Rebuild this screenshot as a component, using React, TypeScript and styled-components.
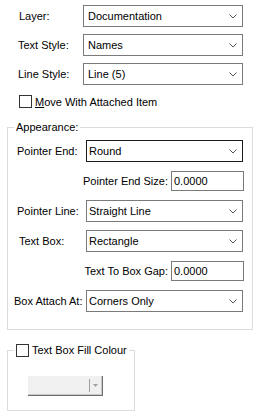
import styled, { createGlobalStyle } from 'styled-components'

const Global = createGlobalStyle`
  body {
    margin: 0;
    background: #ffffff;
    font-family: "Liberation Sans", Arial, sans-serif;
    font-size: 11px;
    color: #000000;
  }
`

const Page = styled.div`
  width: 261px;
  box-sizing: border-box;
  padding: 5px 8px 0 7px;
  display: flex;
  flex-direction: column;
`

const TopRows = styled.div`
  display: flex;
  flex-direction: column;
  gap: 7px;
  padding-left: 11px;
`

const Row = styled.div`
  display: flex;
  align-items: center;
  height: 22px;
`

const Label = styled.span<{ $width: number; $indent?: number }>`
  width: ${p => p.$width}px;
  padding-left: ${p => p.$indent || 0}px;
  box-sizing: border-box;
  white-space: nowrap;
`

const Combo = styled.div<{ $width: number; $focused?: boolean; $inset?: number }>`
  width: ${p => p.$width}px;
  height: 22px;
  box-sizing: border-box;
  border: 1px solid ${p => (p.$focused ? '#1a1a1a' : '#7a7a7a')};
  display: flex;
  align-items: center;
  justify-content: space-between;
  padding: 0 5px 0 ${p => p.$inset ?? 4}px;
  background: #ffffff;
`

const Chevron = () => (
  <svg width="8" height="5" viewBox="0 0 8 5">
    <polyline points="0.5,0.5 4,4 7.5,0.5" fill="none" stroke="#555" strokeWidth="1" />
  </svg>
)

const Select = ({ value, width, focused, inset }: { value: string; width: number; focused?: boolean; inset?: number }) => (
  <Combo $width={width} $focused={focused} $inset={inset}>
    <span>{value}</span>
    <Chevron />
  </Combo>
)

const CheckRow = styled.label`
  display: flex;
  align-items: center;
  gap: 3px;
  height: 13px;
  margin: 10px 0 0 12px;
`

const Box = styled.span`
  width: 13px;
  height: 13px;
  box-sizing: border-box;
  border: 1px solid #333333;
  background: #ffffff;
  flex: none;
`

const Group = styled.fieldset<{ $width: number; $top: number }>`
  width: ${p => p.$width}px;
  box-sizing: border-box;
  margin: ${p => p.$top}px 0 0 0;
  padding: 0;
  min-width: 0;
  border: 1px solid #dcdcdc;
`

const Legend = styled.legend`
  margin-left: 6px;
  padding: 0 2px;
  line-height: 13px;
  height: 13px;
  display: flex;
  align-items: center;
  gap: 3px;
`

const GroupBody = styled.div`
  display: flex;
  flex-direction: column;
  gap: 8px;
  padding: 6px 8px 17px 6px;
`

const EditRow = styled.div`
  display: flex;
  align-items: center;
  justify-content: flex-end;
  height: 22px;
  gap: 3px;
`

const Edit = styled.div`
  width: 73px;
  height: 20px;
  box-sizing: border-box;
  border: 1px solid #7a7a7a;
  padding-left: 2px;
  display: flex;
  align-items: center;
`

const FillBody = styled.div`
  padding: 19px 0 14px 20px;
`

const ColourPicker = styled.div`
  width: 75px;
  height: 20px;
  box-sizing: border-box;
  background: #f0f0f0;
  border-right: 1px solid #6e6e6e;
  border-bottom: 1px solid #6e6e6e;
  box-shadow: inset -1px -1px 0 #c8c8c8;
  display: flex;
  justify-content: flex-end;
  align-items: center;
  padding-right: 4px;
`

const PickerArrow = styled.div`
  height: 13px;
  border-left: 1px solid #a0a0a0;
  padding-left: 3px;
  display: flex;
  align-items: center;
`

export default function App() {
  return (
    <Page>
      <Global />
      <TopRows>
        <Row>
          <Label $width={65} $indent={1}>Layer:</Label>
          <Select value="Documentation" width={160} />
        </Row>
        <Row>
          <Label $width={65}>Text Style:</Label>
          <Select value="Names" width={160} />
        </Row>
        <Row>
          <Label $width={65}>Line Style:</Label>
          <Select value="Line (5)" width={160} />
        </Row>
      </TopRows>

      <CheckRow>
        <Box />
        <span>
          <u>M</u>ove With Attached Item
        </span>
      </CheckRow>

      <Group $width={246} $top={13}>
        <Legend>Appearance:</Legend>
        <GroupBody>
          <Row>
            <Label $width={72} $indent={3}>Pointer End:</Label>
            <Select value="Round" width={157} focused inset={2} />
          </Row>
          <EditRow>
            <span>Pointer End Size:</span>
            <Edit>0.0000</Edit>
          </EditRow>
          <Row>
            <Label $width={72} $indent={3}>Pointer Line:</Label>
            <Select value="Straight Line" width={157} inset={2} />
          </Row>
          <Row>
            <Label $width={72} $indent={5}>Text Box:</Label>
            <Select value="Rectangle" width={157} inset={2} />
          </Row>
          <EditRow>
            <span>Text To Box Gap:</span>
            <Edit>0.0000</Edit>
          </EditRow>
          <Row>
            <Label $width={72}>Box Attach At:</Label>
            <Select value="Corners Only" width={157} inset={2} />
          </Row>
        </GroupBody>
      </Group>

      <Group $width={128} $top={14}>
        <Legend>
          <Box />
          <span>Text Box Fill Colour</span>
        </Legend>
        <FillBody>
          <ColourPicker>
            <PickerArrow>
              <svg width="5" height="3" viewBox="0 0 5 3">
                <polygon points="0,0 5,0 2.5,3" fill="#a0a0a0" />
              </svg>
            </PickerArrow>
          </ColourPicker>
        </FillBody>
      </Group>
    </Page>
  )
}
